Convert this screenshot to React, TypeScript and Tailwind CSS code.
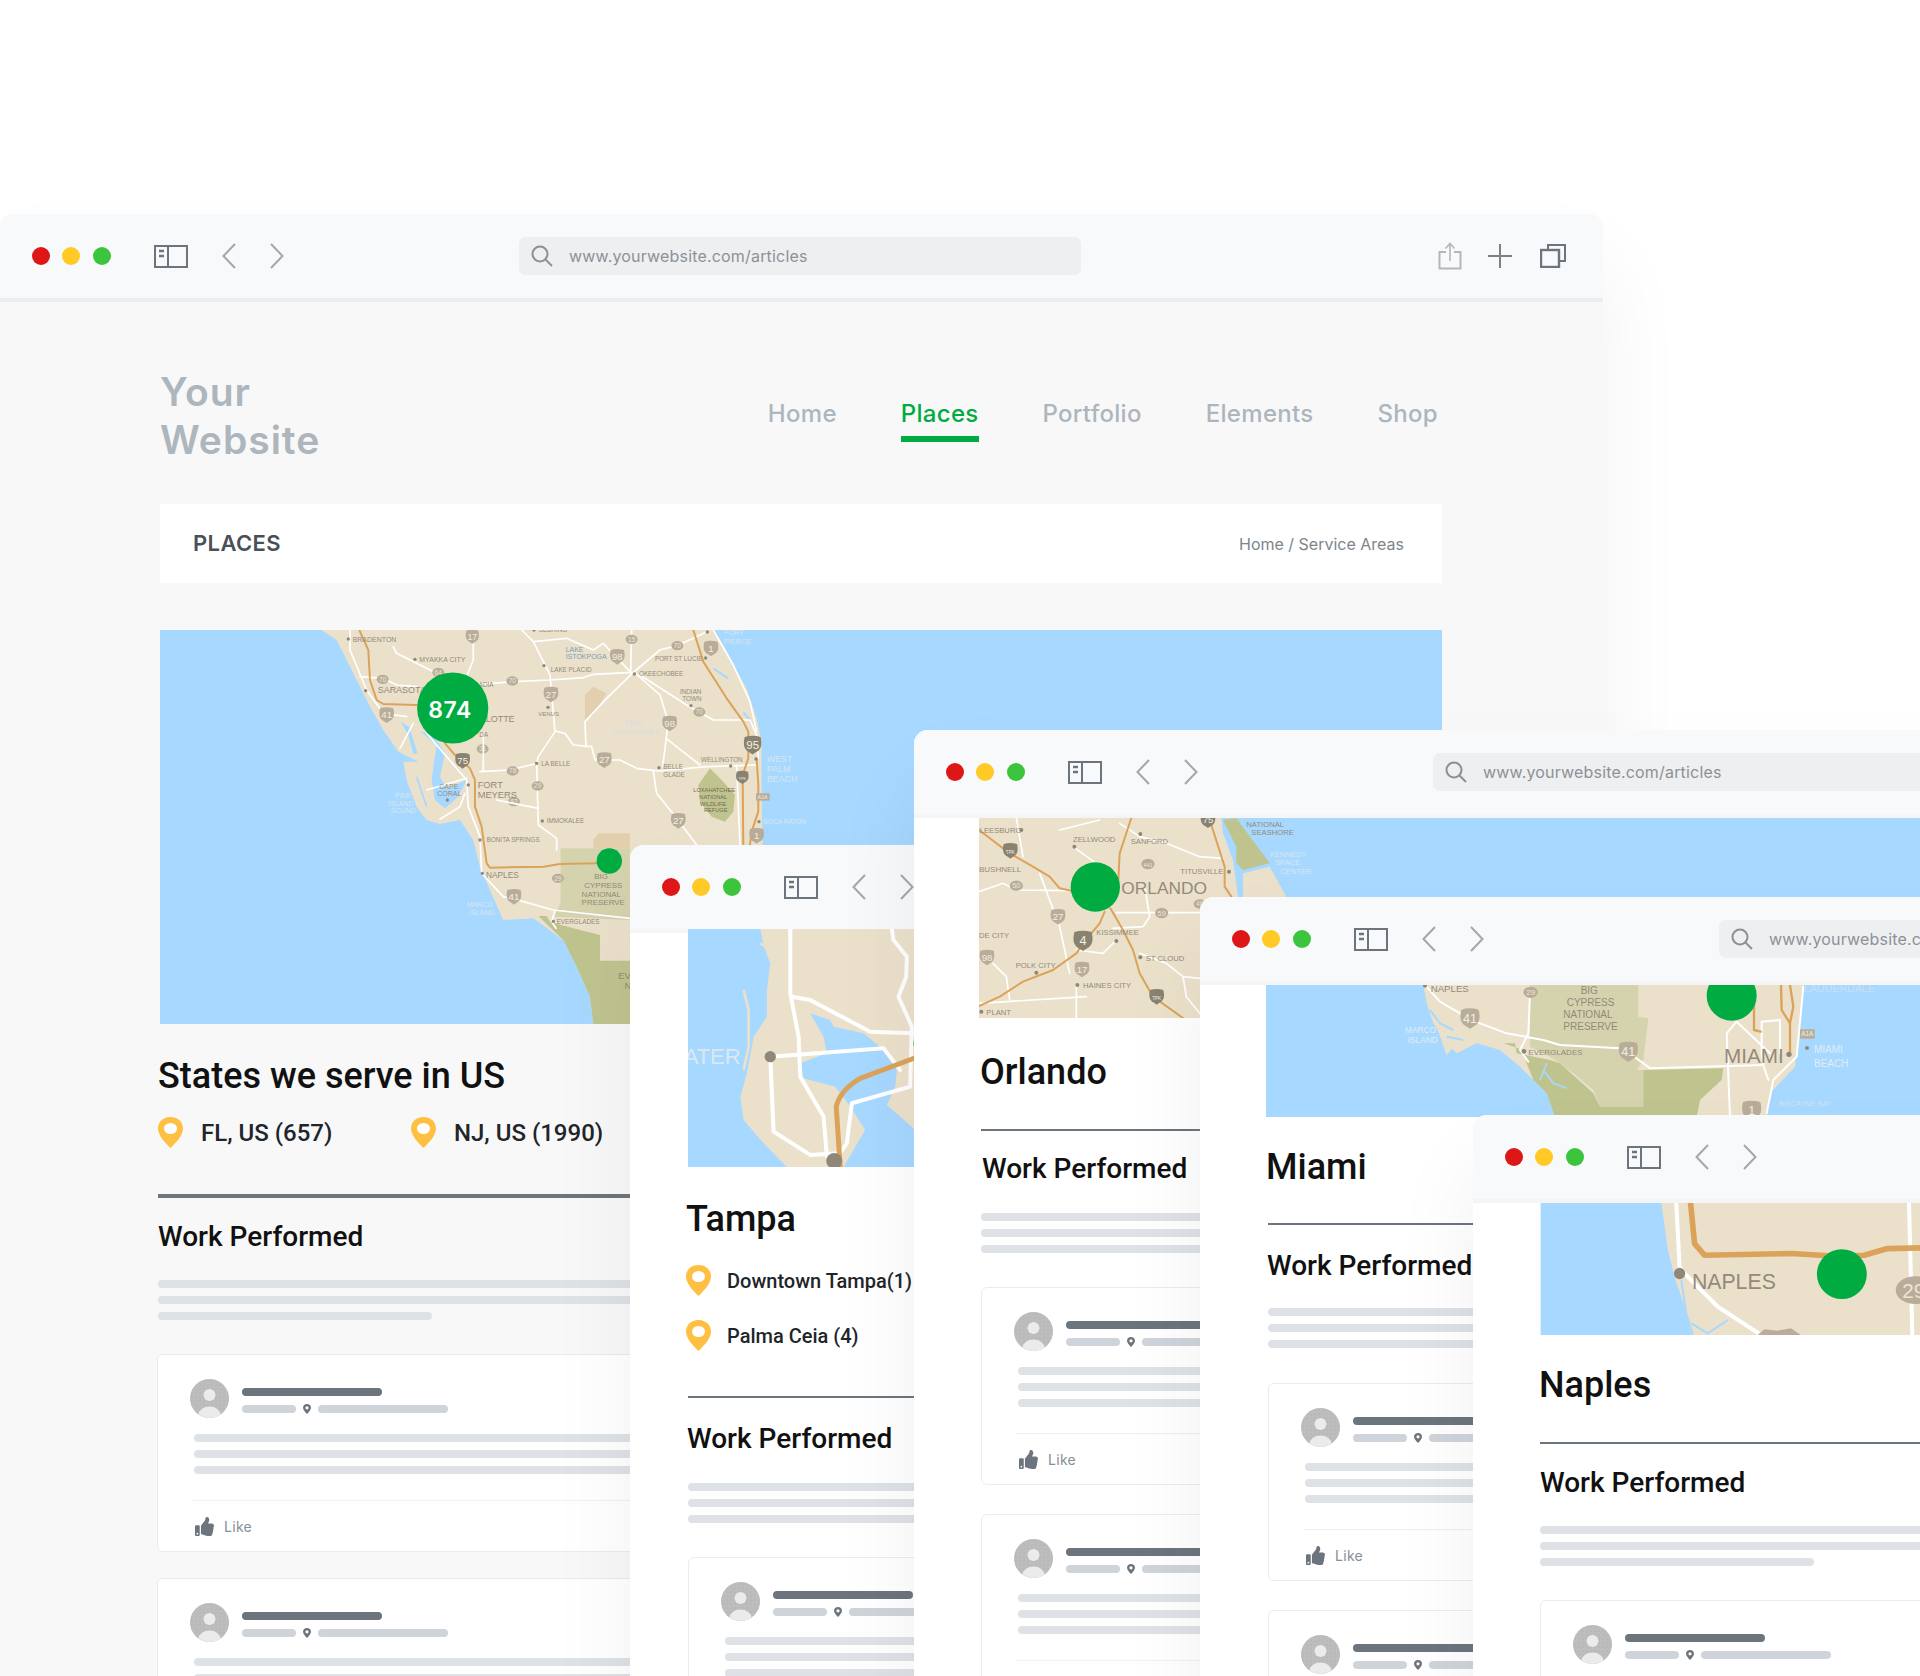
import React from 'react';
import { FaThumbsUp } from 'react-icons/fa';

const INTER = { fontFamily: 'Inter, "Liberation Sans", sans-serif' };
const ROBOTO = { fontFamily: 'Roboto, "Liberation Sans", sans-serif' };
const BLUE = '#a7d8ff';
const LAND = '#ebe1cb';
const ROAD = '#dba35a';
const MAPFONT = 'Liberation Sans, Arial, sans-serif';

type LProps = { x: number; y: number; t: string; s?: number; c?: string };
const L = ({ x, y, t, s = 21, c = '#94897a' }: LProps) => (
  <text x={x} y={y} fontSize={s} fill={c} fontFamily={MAPFONT}>{t}</text>
);
const W = ({ d, w = 5 }: { d: string; w?: number }) => (
  <path d={d} fill="none" stroke="#ffffff" strokeWidth={w} strokeLinejoin="round" strokeLinecap="round" />
);
const H = ({ d, w = 6 }: { d: string; w?: number }) => (
  <path d={d} fill="none" stroke={ROAD} strokeWidth={w} strokeLinejoin="round" strokeLinecap="round" />
);
const Shield = ({ x, y, t, dark, k = 1 }: { x: number; y: number; t: string; dark?: boolean; k?: number }) => (
  <g transform={`translate(${x} ${y}) scale(${k})`}>
    <path d="M-20,-20 Q0,-26 20,-20 Q26,4 15,14 Q6,20 0,24 Q-6,20 -15,14 Q-26,4 -20,-20 Z" fill={dark ? '#8a8270' : '#b9ad99'} />
    <text x="0" y="10" textAnchor="middle" fontSize={t.length > 2 ? 14 : 29} fill="#f3eee2" fontFamily={MAPFONT}>{t}</text>
  </g>
);
const Oval = ({ x, y, t, k = 1 }: { x: number; y: number; t: string; k?: number }) => (
  <g transform={`translate(${x} ${y}) scale(${k})`}>
    <ellipse cx="0" cy="0" rx="18" ry="14" fill="#b9ad99" />
    <text x="0" y="7" textAnchor="middle" fontSize={t.length > 2 ? 15 : 20} fill="#ece5d6" fontFamily={MAPFONT}>{t}</text>
  </g>
);
const Dot = ({ x, y, r = 5 }: { x: number; y: number; r?: number }) => <circle cx={x} cy={y} r={r} fill="#8f8878" />;

/* Overview of south-west Florida (window 1) */
function MapOverview() {
  return (
    <svg viewBox="160 630 1282 394" className="block h-[394px] w-[1282px]">
      <rect x="160" y="630" width="1282" height="394" fill={BLUE} />
      <g transform="translate(150 620) scale(0.3333)">
        <path
          d="M515,30 L560,60 L590,120 L620,180 L660,260 L700,330 L745,395 L805,425 L760,425 L770,480 L800,560 L830,600 L870,612 L930,600 L970,660 L990,740 L1020,810 L1060,900 L1150,895 L1240,960 L1280,1040 L1320,1130 L1330,1212 L1838,1212 L1838,675 L1835,515 L1835,365 L1820,295 L1790,205 L1750,135 L1720,75 L1690,30 Z"
          fill={LAND}
        />
        <path d="M752,305 L778,322 L803,400 L790,402 L775,345 Z" fill={BLUE} />
        <path d="M812,335 L860,375 L850,440 L845,480 L855,540 L885,565 L925,530 L950,480 L890,505 L870,470 L885,400 L850,345 Z" fill={BLUE} />
        <path d="M800,470 L830,560" stroke={BLUE} strokeWidth="5" fill="none" />
        <path d="M1232,685 L1440,685 L1440,900 L1210,890 L1232,850 Z" fill="#d5d3ae" />
        <path d="M1165,888 L1190,888 L1200,905 L1270,925 L1350,945 L1350,1022 L1440,1022 L1440,1212 L1330,1212 L1320,1130 L1280,1040 L1240,960 Z" fill="#bfc48f" />
        <path d="M1330,660 L1345,640 L1440,640 L1440,684 L1330,684 Z" fill="#e3cfae" />
        <path d="M1305,225 L1330,200 L1370,220 L1330,285 L1305,300 Z" fill="#e3cfae" />
        <W d="M600,30 L600,90 L650,210 L700,280 L770,290 M790,310 L750,385 M830,340 L950,480 L955,560 L990,650 L995,760 L1060,830 L1120,845 L1210,870 L1440,895" />
        <W d="M730,80 L740,100 L860,160 M970,30 L970,120 L950,170 M630,170 L700,175 L740,195 L800,200 M1215,875 L1205,905 L1218,925" />
        <W d="M830,510 L950,475 M870,598 L930,560 L945,520" />
        <H d="M628,30 L655,90 L660,180 L680,240 L700,252 L800,255 M885,370 L915,405 L960,445 L975,480 L975,560 L995,620 L1010,730 L1020,743 L1180,740 L1230,732 L1340,730" />
        <Shield x={967} y={50} t="17" k={0.9} />
        <Oval x={698} y={178} t="70" />
        <Shield x={710} y={285} t="41" />
        <Shield x={938} y={422} t="75" dark />
        <Oval x={998} y={387} t="31" />
        <Oval x={1092} y={545} t="82" />
        <Shield x={1092} y={830} t="41" />
        <Oval x={1224} y={775} t="29" />
        <Oval x={865} y={157} t="64" />
        {[[595, 57], [795, 118], [647, 212], [955, 495], [892, 540], [990, 660], [997, 760], [1210, 904], [1158, 431]].map(([x, y]) => (
          <Dot key={`${x}`} x={x} y={y} r={5} />
        ))}
        <L x={608} y={65} t="BRADENTON" />
        <L x={808} y={127} t="MYAKKA CITY" />
        <L x={683} y={220} t="SARASOTA" s={27} />
        <L x={983} y={505} t="FORT" s={28} />
        <L x={983} y={534} t="MEYERS" s={28} />
        <L x={868} y={506} t="CAPE" />
        <L x={862} y={528} t="CORAL" />
        <L x={735} y={535} t="PINE" c="#d9e6ee" />
        <L x={715} y={557} t="ISLAND" c="#d9e6ee" />
        <L x={722} y={578} t="SOUND" c="#d9e6ee" />
        <L x={1008} y={775} t="NAPLES" s={25} />
        <L x={950} y={862} t="MARCO" c="#d9e6ee" />
        <L x={958} y={884} t="ISLAND" c="#d9e6ee" />
        <L x={1333} y={778} t="BIG" s={24} />
        <L x={1303} y={804} t="CYPRESS" s={24} />
        <L x={1295} y={830} t="NATIONAL" s={24} />
        <L x={1295} y={856} t="PRESERVE" s={24} />
        <L x={1220} y={911} t="EVERGLADES" s={19} />
        <L x={1405} y={1076} t="EV" s={28} />
        <L x={1424} y={1106} t="N" s={28} />
      </g>
      <g transform="translate(480 625) scale(0.3333)">
        <path d="M690,430 L730,470 L765,510 L760,560 L735,590 L695,575 L660,530 L655,480 Z" fill="#bfc48f" />
        <path d="M700,130 L745,160 L730,150 M790,262 L810,285" stroke={BLUE} strokeWidth="6" fill="none" />
        <W d="M0,178 L95,170 L210,165 L310,158 L340,148 L460,142 L540,75 L590,62 L640,40 L680,20" />
        <W d="M125,15 L160,50 L210,150 L225,320 L175,395 L170,415 L175,600 L230,640 L230,675 M160,50 L260,40 L340,75 L370,55 L450,140" />
        <W d="M455,15 L452,142 M225,318 L255,325 L280,360 L335,365 L345,405 L420,405 L470,430 L535,438 L680,425 L830,420" />
        <W d="M460,142 L380,220 L315,290 L318,365 M470,148 L540,210 L565,290 L548,425 M480,150 L620,240 L700,285 L810,285 L830,330 L835,400" />
        <W d="M558,340 L660,420 M520,440 L530,505 L590,580 L650,660 M0,440 L90,435 L170,415 M10,330 L10,440 M50,525 L100,535 L175,550 M770,420 L780,660 M700,15 L760,120 L810,230 L830,320" />
        <H d="M640,15 L670,110 L740,220 L790,290 L805,320 L805,400 L788,450 L790,660" />
        <H d="M830,400 L835,480 L835,560 L815,620 L810,660" />
        <Oval x={455} y={43} t="15" />
        <Oval x={592} y={62} t="70" />
        <Shield x={693} y={70} t="1" />
        <Shield x={412} y={95} t="98" />
        <Oval x={97} y={168} t="70" />
        <Shield x={213} y={208} t="27" />
        <Shield x={569} y={295} t="98" />
        <Shield x={373} y={405} t="27" />
        <Shield x={818} y={360} t="95" dark k={1.2} />
        <Oval x={98} y={438} t="78" />
        <Oval x={173} y={483} t="29" />
        <Oval x={658} y={261} t="70" />
        <Shield x={595} y={587} t="27" />
        <Shield x={830} y={632} t="1" />
        <Shield x={787} y={457} t="TPK" dark k={0.85} />
        <rect x="828" y="505" width="41" height="22" fill="#b9ad99" />
        <text x="848" y="522" textAnchor="middle" fontSize="16" fill="#f3eee2" fontFamily={MAPFONT}>A1A</text>
        {[[192, 122], [204, 247], [463, 147], [677, 99], [633, 242], [170, 415], [537, 428], [752, 423], [187, 588], [828, 402], [837, 590], [682, 21], [162, 15]].map(([x, y]) => (
          <Dot key={`${x}-${y}`} x={x} y={y} r={5} />
        ))}
        <L x={212} y={140} t="LAKE PLACID" s={19} />
        <L x={175} y={274} t="VENUS" s={18} />
        <L x={477} y={154} t="OKEECHOBEE" s={19} />
        <L x={525} y={107} t="PORT ST LUCIE" s={19} />
        <L x={600} y={206} t="INDIAN" s={19} />
        <L x={607} y={229} t="TOWN" s={19} />
        <L x={184} y={423} t="LA BELLE" s={19} />
        <L x={550} y={433} t="BELLE" s={19} />
        <L x={550} y={456} t="GLADE" s={19} />
        <L x={663} y={410} t="WELLINGTON" s={19} />
        <L x={200} y={595} t="IMMOKALEE" s={19} />
        <L x={20} y={652} t="BONITA SPRINGS" s={19} />
        <L x={176} y={21} t="SEBRING" s={19} />
        <L x={17} y={290} t="LOTTE" s={27} />
        <L x={-4} y={186} t="ADIA" s={19} />
        <L x={-2} y={337} t="DA" s={19} />
        <L x={850} y={597} t="BOCA RATON" s={20} c="#d9e6ee" />
        <L x={860} y={412} t="WEST" s={27} c="#d9e6ee" />
        <L x={860} y={441} t="PALM" s={27} c="#d9e6ee" />
        <L x={860} y={470} t="BEACH" s={27} c="#d9e6ee" />
        <L x={732} y={30} t="FORT" s={22} c="#d9e6ee" />
        <L x={732} y={56} t="PIERCE" s={22} c="#d9e6ee" />
        <L x={257} y={82} t="LAKE" c="#7a9cb8" />
        <L x={257} y={103} t="ISTOKPOGA" c="#7a9cb8" />
        <L x={435} y={300} t="LAKE" c="#d4dde2" />
        <L x={393} y={326} t="OKEECHOBEE" c="#d4dde2" />
        <L x={640} y={502} t="LOXAHATCHEE" s={17} c="#6f6a50" />
        <L x={658} y={522} t="NATIONAL" s={17} c="#6f6a50" />
        <L x={660} y={542} t="WILDLIFE" s={17} c="#6f6a50" />
        <L x={672} y={562} t="REFUGE" s={17} c="#6f6a50" />
      </g>
      <circle cx="452.7" cy="708" r="35.6" fill="#00ac41" />
      <text x="450" y="718" textAnchor="middle" fontSize="23" fontWeight="600" fill="#ffffff" fontFamily="Inter, sans-serif" letterSpacing="0.5">874</text>
      <circle cx="609.3" cy="861" r="12.7" fill="#00ac41" />
    </svg>
  );
}

function MapTampa() {
  return (
    <svg viewBox="203 297 1282 714" className="block h-[238px] w-[427px]">
      <rect x="203" y="297" width="1282" height="714" fill={BLUE} />
      <path d="M420,297 L430,345 L450,400 L440,480 L440,560 L400,620 L380,730 L360,800 L370,870 L430,940 L500,1011 L900,1011 L900,297 Z" fill={LAND} />
      <path d="M570,550 L630,570 L640,590 L730,610 L790,660 L830,720 L825,770 L800,825 L880,895 L900,1011 L670,1011 L735,900 L690,830 L645,770 L550,745 L540,700 L620,670 L610,620 Z" fill={BLUE} />
      <path d="M370,480 L385,540 L385,650 L370,720 M460,360 L490,355 M420,340 L470,370" stroke={LAND} strokeWidth="8" fill="none" />
      <W w={12} d="M510,297 L510,490 L535,620 L540,740 L610,860 L620,980" />
      <W w={12} d="M515,500 L570,510 L750,605 L880,610" />
      <W w={12} d="M815,297 L820,330 L860,380 L858,440 L835,500 L875,590 L870,770 L695,820 L680,940 L660,970 L570,975 L460,905 L450,680 L790,655 L840,720" />
      <H w={15} d="M900,678 L720,745 Q660,780 648,830 L660,1011" />
      <Dot x={450} y={680} r={17} />
      <Dot x={642} y={993} r={24} />
      <L x={190} y={702} t="ATER" s={66} c="#dde8ee" />
      <circle cx="925" cy="640" r="45" fill="#00ac41" />
    </svg>
  );
}

function MapOrlando() {
  return (
    <svg viewBox="238 294 3846 600" className="block h-[200px] w-[1282px]">
      <rect x="238" y="294" width="3846" height="600" fill={BLUE} />
      <path d="M238,294 L965,294 L970,340 L1000,420 L1015,530 L1000,894 L238,894 Z" fill={LAND} />
      <path d="M1030,460 L1110,440 L1160,530 L1030,535 Z" fill={LAND} />
      <path d="M970,300 L1010,380 L1010,430 L1030,450 L1110,430 L1010,295 Z" fill="#bfc48f" />
      <W d="M238,515 L310,490 L350,510 L510,512 M650,578 L900,578 M420,460 L480,620 L510,760 M530,690 L610,700 L650,660 M530,794 L530,894 M560,830 L238,850 M660,310 L720,350 L800,370 L900,410 L970,415 M480,330 L600,300 M520,380 L590,430 M280,730 L320,770 L330,840 M735,500 L750,590 L730,620 L640,625 M720,700 L800,730 L850,770 L900,775 M850,770 L860,830 L900,880 M350,294 L370,410" />
      <H d="M238,330 L330,400 L400,440 L450,470 L480,505 L515,512 M615,575 L600,610 L550,670 L530,700 L460,750 L370,785 L300,830 L238,858 M632,565 L670,630 L700,690 L720,760 L760,830 L850,894 M695,294 L660,400 L655,500 M935,315 L975,440 L975,500 L995,530" />
      <Shield x={332} y={392} t="TPK" dark />
      <Oval x={350} y={497} t="50" k={1.1} />
      <Shield x={475} y={590} t="27" />
      <Shield x={550} y={662} t="4" dark k={1.3} />
      <Shield x={547} y={748} t="17" />
      <Shield x={262} y={712} t="98" />
      <Oval x={745} y={432} t="441" k={1.1} />
      <Oval x={786} y={579} t="59" k={1.1} />
      <Shield x={925} y={300} t="75" dark />
      <Shield x={771} y={830} t="TPK" dark />
      <Oval x={900} y={552} t="46" />
      {[[365, 330], [524, 380], [722, 342], [988, 455], [650, 663], [722, 712], [410, 758], [533, 795], [245, 875]].map(([x, y]) => (
        <Dot key={`${x}`} x={x} y={y} r={6} />
      ))}
      <L x={240} y={338} t="LEESBURG" s={23} />
      <L x={238} y={455} t="BUSHNELL" s={24} />
      <L x={520} y={367} t="ZELLWOOD" s={23} />
      <L x={693} y={373} t="SANFORD" s={23} />
      <L x={842} y={463} t="TITUSVILLE" s={23} />
      <L x={665} y={522} t="ORLANDO" s={52} />
      <L x={590} y={646} t="KISSIMMEE" s={23} />
      <L x={738} y={722} t="ST CLOUD" s={23} />
      <L x={550} y={805} t="HAINES CITY" s={23} />
      <L x={348} y={743} t="POLK CITY" s={23} />
      <L x={238} y={653} t="DE CITY" s={23} />
      <L x={260} y={884} t="PLANT" s={23} />
      <L x={1040} y={320} t="NATIONAL" s={23} />
      <L x={1055} y={346} t="SEASHORE" s={23} />
      <L x={1110} y={410} t="KENNEDY" s={23} c="#d9e6ee" />
      <L x={1126} y={436} t="SPACE" s={23} c="#d9e6ee" />
      <L x={1142} y={463} t="CENTER" s={23} c="#d9e6ee" />
      <circle cx="587" cy="501" r="74" fill="#00ac41" />
    </svg>
  );
}

function MapMiami() {
  return (
    <svg viewBox="18 15 3846 396" className="block h-[132px] w-[1282px]">
      <rect x="18" y="15" width="3846" height="396" fill={BLUE} />
      <path d="M490,15 L500,70 L520,130 L560,190 L590,220 L650,190 L720,210 L780,260 L820,300 L860,340 L885,411 L1520,411 L1530,340 L1605,260 L1632,15 Z" fill={LAND} />
      <path d="M530,140 L560,225 L590,190 Z" fill={LAND} />
      <path d="M510,90 L540,130 L580,150 M560,170 L610,180" stroke={BLUE} strokeWidth="6" fill="none" />
      <path d="M810,15 L1135,15 L1135,110 L1165,115 L1150,240 L1130,270 L1150,270 L1150,380 L1020,380 L1000,330 L940,280 L900,250 L870,230 L810,200 Z" fill="#d5d3ae" />
      <path d="M1150,270 L1390,265 L1385,300 L1320,360 L1310,411 L885,411 L860,340 L820,300 L800,250 L790,210 L730,190 L765,190 L770,220 L870,240 L900,250 L1000,340 L1020,380 L1150,380 Z" fill="#bfc48f" />
      <path d="M850,270 L880,310 L920,325 M860,250 L840,300" stroke={BLUE} strokeWidth="5" fill="none" />
      <W w={6} d="M495,15 L540,65 L600,100 L660,130 L740,160 L850,180 L900,195 L1080,205 L1130,235 L1170,265 L1510,255" />
      <W w={6} d="M810,40 L805,160 L780,210 L805,245" />
      <W w={6} d="M1430,125 L1400,160 L1410,411 M1430,125 L1530,220 M1505,125 L1505,220 M1505,125 L1560,120 L1560,220 M1525,300 L1510,255 L1505,220 M1630,20 L1610,230 L1540,300 L1520,400" />
      <H w={7} d="M1482,70 L1482,150 L1502,155" />
      <H w={7} d="M1563,15 L1565,90 L1590,130 L1590,215 M1590,15 L1600,80 L1590,130" />
      <Oval x={812} y={37} t="29" k={1.2} />
      <Shield x={630} y={115} t="41" k={1.3} />
      <Shield x={1105} y={215} t="41" k={1.3} />
      <Shield x={1475} y={392} t="1" k={1.3} />
      <rect x="1620" y="148" width="44" height="28" fill="#b9ad99" />
      <text x="1642" y="169" textAnchor="middle" fontSize="19" fill="#f3eee2" fontFamily={MAPFONT}>A1A</text>
      <Dot x={495} y={17} r={6} />
      <Dot x={792} y={214} r={7} />
      <Dot x={1587} y={223} r={8} />
      <Dot x={1641} y={204} r={6} />
      <L x={512} y={36} t="NAPLES" s={29} />
      <L x={435} y={158} t="MARCO" s={25} c="#e0ecf4" />
      <L x={443} y={188} t="ISLAND" s={25} c="#e0ecf4" />
      <L x={805} y={225} t="EVERGLADES" s={24} />
      <L x={962} y={42} t="BIG" s={30} />
      <L x={920} y={77} t="CYPRESS" s={30} />
      <L x={910} y={113} t="NATIONAL" s={30} />
      <L x={910} y={149} t="PRESERVE" s={30} />
      <L x={1392} y={250} t="MIAMI" s={62} />
      <L x={1662} y={220} t="MIAMI" s={30} c="#e0ecf4" />
      <L x={1662} y={262} t="BEACH" s={30} c="#e0ecf4" />
      <L x={1557} y={377} t="BISCAYNE BAY" s={22} c="#d0e4f2" />
      <L x={1632} y={36} t="LAUDERDALE" s={32} c="#c9e0f2" />
      <circle cx="1415" cy="47" r="75" fill="#00ac41" />
    </svg>
  );
}

function MapNaples() {
  return (
    <svg viewBox="207 308 3846 397" className="block h-[132px] w-[1282px]">
      <rect x="207" y="308" width="3846" height="397" fill={BLUE} />
      <path d="M570,308 L590,450 L610,530 L640,620 L660,705 L1700,705 L1700,308 Z" fill={LAND} />
      <path d="M630,540 L645,640 L665,705 M660,670 L710,700 L770,660" stroke={BLUE} strokeWidth="6" fill="none" />
      <W w={12} d="M615,308 L625,500 L640,520 L740,620 L870,705 M1315,308 L1325,705" />
      <H w={17} d="M658,308 L670,430 L700,465 L960,460 L1100,468 L1180,465 L1250,445 L1500,440" />
      <path d="M860,705 L880,688 L920,692 L960,685 L990,705 Z" fill="#b9ad99" />
      <Dot x={625} y={520} r={17} />
      <L x={662} y={568} t="NAPLES" s={64} />
      <ellipse cx="1335" cy="570" rx="60" ry="42" fill="#b9ad99" />
      <text x="1295" y="593" fontSize="62" fill="#ece5d6" fontFamily={MAPFONT}>29</text>
      <circle cx="1113" cy="522" r="75" fill="#00ac41" />
    </svg>
  );
}

function Chevron({ flip }: { flip?: boolean }) {
  return (
    <svg width="14" height="26" viewBox="0 0 14 26" className="block shrink-0" style={flip ? { transform: 'scaleX(-1)' } : undefined}>
      <path d="M13,1 L1.5,13 L13,25" fill="none" stroke="#a3a7aa" strokeWidth="2" />
    </svg>
  );
}

function Toolbar({ line }: { line: string }) {
  return (
    <div className={`flex h-[88px] shrink-0 items-center rounded-t-[14px] bg-[#f8f9fa] pl-[32px] pr-[37px] border-b-4 ${line}`}>
      <span className="h-[18px] w-[18px] shrink-0 rounded-full bg-[#dd1717]" />
      <span className="ml-[12px] h-[18px] w-[18px] shrink-0 rounded-full bg-[#ffc926]" />
      <span className="ml-[13px] h-[18px] w-[18px] shrink-0 rounded-full bg-[#3cc43c]" />
      <svg width="34" height="23" viewBox="0 0 34 23" className="ml-[43px] block shrink-0">
        <rect x="1" y="1" width="32" height="21" fill="none" stroke="#6c757d" strokeWidth="2" />
        <path d="M14,1 V22" stroke="#6c757d" strokeWidth="2" />
        <path d="M5,6 H10 M5,11 H10" stroke="#6c757d" strokeWidth="2.4" />
      </svg>
      <div className="ml-[34px]"><Chevron /></div>
      <div className="ml-[34px]"><Chevron flip /></div>
      <div className="ml-[235px] flex h-[38px] w-[562px] shrink-0 items-center rounded-[7px] bg-[#eeeff1] pl-[12px]" style={INTER}>
        <svg width="22" height="22" viewBox="0 0 22 22" className="block shrink-0">
          <circle cx="9" cy="9" r="7.5" fill="none" stroke="#8b9095" strokeWidth="2" />
          <path d="M14.5,14.5 L21,21" stroke="#8b9095" strokeWidth="2" />
        </svg>
        <span className="ml-[16px] text-[16px] tracking-[0.18px] text-[#8d9196]">www.yourwebsite.com/articles</span>
      </div>
      <svg width="24" height="28" viewBox="0 0 24 28" className="ml-auto block shrink-0">
        <path d="M8,10 H1.5 V26.5 H22.5 V10 H16" fill="none" stroke="#b4b7ba" strokeWidth="2" />
        <path d="M12,19 V2 M7.5,6.5 L12,1.5 L16.5,6.5" fill="none" stroke="#b4b7ba" strokeWidth="1.6" />
      </svg>
      <svg width="24" height="24" viewBox="0 0 24 24" className="ml-[26px] block shrink-0">
        <path d="M12,0 V24 M0,12 H24" stroke="#7c8186" strokeWidth="2" />
      </svg>
      <svg width="26" height="24" viewBox="0 0 26 24" className="ml-[28px] block shrink-0">
        <path d="M8,5 V1 H25 V17 H20" fill="none" stroke="#6c757d" strokeWidth="2" />
        <rect x="1" y="6" width="18" height="17" fill="none" stroke="#6c757d" strokeWidth="2.4" />
      </svg>
    </div>
  );
}

function Bar({ cls }: { cls: string }) {
  return <div className={`h-[8px] rounded-full ${cls}`} />;
}

function TextLines({ last }: { last: string }) {
  return (
    <div className="flex flex-col gap-[8px]">
      <Bar cls="w-full bg-[#dee2e6]" />
      <Bar cls="w-full bg-[#dee2e6]" />
      <Bar cls={`${last} bg-[#dee2e6]`} />
    </div>
  );
}

function Avatar() {
  return (
    <svg width="39" height="39" viewBox="0 0 39 39" className="block shrink-0">
      <defs>
        <clipPath id="av"><circle cx="19.5" cy="19.5" r="19.5" /></clipPath>
        <pattern id="avd" width="4" height="4" patternUnits="userSpaceOnUse">
          <circle cx="2" cy="2" r="0.6" fill="#a6a6a6" />
        </pattern>
      </defs>
      <g clipPath="url(#av)">
        <rect width="39" height="39" fill="#bdbdbd" />
        <rect width="39" height="39" fill="url(#avd)" />
        <circle cx="19.5" cy="16" r="6" fill="#ebebeb" />
        <ellipse cx="19.5" cy="36" rx="11" ry="8.5" fill="#ebebeb" />
      </g>
    </svg>
  );
}

function TinyPin() {
  return (
    <svg width="8" height="10" viewBox="0 0 8 10" className="block shrink-0">
      <path d="M4,0 C6.4,0 8,1.7 8,3.8 C8,6 5.5,8.5 4,10 C2.5,8.5 0,6 0,3.8 C0,1.7 1.6,0 4,0 Z" fill="#6c757d" />
      <circle cx="4" cy="3.8" r="1.6" fill="#ffffff" />
    </svg>
  );
}

function Card() {
  return (
    <div className="h-[198px] rounded-[6px] border border-[#e9ecef] bg-white pl-[32px] pt-[24px]">
      <div className="flex items-start">
        <Avatar />
        <div className="ml-[13px] pt-[9px]">
          <div className="h-[8px] w-[140px] rounded-full bg-[#6c757d]" />
          <div className="mt-[8px] flex items-center">
            <div className="h-[8px] w-[54px] rounded-full bg-[#ced4da]" />
            <div className="ml-[7px]"><TinyPin /></div>
            <div className="ml-[7px] h-[8px] w-[130px] rounded-full bg-[#ced4da]" />
          </div>
        </div>
      </div>
      <div className="ml-[4px] mt-[16px]">
        <TextLines last="w-full" />
      </div>
      <div className="ml-[2px] mt-[26px] border-t border-[#eef0f2] pl-[2px] pt-[15px]">
        <div className="flex items-center" style={INTER}>
          <FaThumbsUp className="h-[19px] w-[21px] text-[#6c757d]" />
          <span className="ml-[9px] text-[14px] tracking-[0.3px] text-[#868e96]">Like</span>
        </div>
      </div>
    </div>
  );
}

function YellowPin() {
  return (
    <svg width="25" height="31" viewBox="0 0 25 31" className="block shrink-0">
      <path d="M12.5,0 C20,0 25,5 25,11.5 C25,19 17,26.5 12.5,31 C8,26.5 0,19 0,11.5 C0,5 5,0 12.5,0 Z" fill="#ffbf42" />
      <ellipse cx="12.5" cy="11.5" rx="6.5" ry="5.5" fill="#ffffff" />
    </svg>
  );
}

function Page({ children }: { children: React.ReactNode }) {
  return <div className="w-[1285px]" style={ROBOTO}>{children}</div>;
}

function App() {
  return (
    <div className="relative h-[1676px] w-[1920px] overflow-hidden bg-white">
      {/* Window 1 */}
      <section className="absolute left-0 top-[214px] h-[1600px] w-[1603px] rounded-t-[14px] bg-[#f8f8f9] shadow-[0_50px_90px_rgba(0,0,0,0.06)]">
        <Toolbar line="border-[#ededee]" />
        <div className="pl-[158px]">
          <Page>
            <header className="ml-[3px] mt-[66px] flex h-[94px] w-[1277px] items-start justify-between" style={INTER}>
              <div className="-ml-[1px] text-[39px] font-semibold leading-[48px] tracking-[1px] text-[#adb5bd]">Your<br />Website</div>
              <nav className="mt-[29px] flex gap-[64px] text-[24px] font-medium leading-[34px] tracking-[0.3px] text-[#adb5bd]">
                <span>Home</span>
                <span className="relative text-[#00ac41]">
                  Places
                  <span className="absolute -bottom-[11px] left-0 right-0 h-[6px] bg-[#00ac41]" />
                </span>
                <span>Portfolio</span>
                <span>Elements</span>
                <span>Shop</span>
              </nav>
            </header>
            <div className="ml-[2px] mt-[42px] flex h-[79px] w-[1282px] items-center justify-between bg-white pl-[33px] pr-[38px]" style={INTER}>
              <span className="-mt-[1px] text-[22px] font-semibold tracking-[0.4px] text-[#495057]">PLACES</span>
              <span className="mt-[1px] text-[16px] text-[#7d858c]">Home / Service Areas</span>
            </div>
            <div className="ml-[2px] mt-[47px]"><MapOverview /></div>
            <h1 className="mt-[29px] text-[36px] font-medium leading-[46px] text-[#111]">States we serve in US</h1>
            <div className="mt-[18px] flex items-start">
              <YellowPin />
              <span className="ml-[18px] mt-[1px] w-[210px] text-[24px] font-medium leading-[31px] text-[#212529]">FL, US (657)</span>
              <YellowPin />
              <span className="ml-[18px] mt-[1px] text-[24px] font-medium leading-[31px] text-[#212529]">NJ, US (1990)</span>
            </div>
            <div className="mt-[45px] h-[4px] bg-[#6c757d]" />
            <h2 className="mt-[21px] text-[28px] font-medium leading-[36px] text-[#111]">Work Performed</h2>
            <div className="mt-[25px]"><TextLines last="w-[274px]" /></div>
            <div className="-ml-[1px] mt-[34px] flex flex-col gap-[26px]">
              <Card />
              <Card />
            </div>
          </Page>
        </div>
      </section>

      {/* Window 2: Tampa */}
      <section className="absolute left-[630px] top-[845px] h-[1600px] w-[1603px] rounded-t-[14px] bg-white shadow-[0_50px_90px_rgba(0,0,0,0.06)]">
        <Toolbar line="border-[#f5f5f6]" />
        <div className="pl-[58px]">
          <Page>
            <div className="-mt-[4px]"><MapTampa /></div>
            <h1 className="-ml-[2px] mt-[29px] text-[36px] font-medium leading-[46px] text-[#111]">Tampa</h1>
            <div className="-ml-[2px] mt-[23px] flex items-start">
              <YellowPin />
              <span className="ml-[16px] mt-[1px] text-[20px] font-medium leading-[31px] text-[#212529]">Downtown Tampa(1)</span>
            </div>
            <div className="-ml-[2px] mt-[23px] flex items-start">
              <YellowPin />
              <span className="ml-[16px] mt-[1px] text-[20px] font-medium leading-[31px] text-[#212529]">Palma Ceia (4)</span>
            </div>
            <div className="mt-[44px] h-[2px] bg-[#6c757d]" />
            <h2 className="-ml-[1px] mt-[23px] text-[28px] font-medium leading-[36px] text-[#111]">Work Performed</h2>
            <div className="mt-[26px]"><TextLines last="w-[274px]" /></div>
            <div className="mt-[34px] flex flex-col gap-[26px]">
              <Card />
            </div>
          </Page>
        </div>
      </section>

      {/* Window 3: Orlando */}
      <section className="absolute left-[914px] top-[730px] h-[1600px] w-[1603px] rounded-t-[14px] bg-white shadow-[0_50px_90px_rgba(0,0,0,0.06)]">
        <Toolbar line="border-[#f5f5f6]" />
        <div className="pl-[67px]">
          <Page>
            <div className="-ml-[2px]"><MapOrlando /></div>
            <h1 className="-ml-[1px] mt-[31px] text-[36px] font-medium leading-[46px] text-[#111]">Orlando</h1>
            <div className="mt-[34px] h-[2px] bg-[#6c757d]" />
            <h2 className="ml-[1px] mt-[20px] text-[28px] font-medium leading-[36px] text-[#111]">Work Performed</h2>
            <div className="mt-[26px]"><TextLines last="w-[274px]" /></div>
            <div className="mt-[34px] flex flex-col gap-[29px]">
              <Card />
              <Card />
            </div>
          </Page>
        </div>
      </section>

      {/* Window 4: Miami */}
      <section className="absolute left-[1200px] top-[897px] h-[1600px] w-[1603px] rounded-t-[14px] bg-white shadow-[0_50px_90px_rgba(0,0,0,0.06)]">
        <Toolbar line="border-[#f5f5f6]" />
        <div className="pl-[68px]">
          <Page>
            <div className="-ml-[2px]"><MapMiami /></div>
            <h1 className="-ml-[2px] mt-[28px] text-[36px] font-medium leading-[44px] text-[#111]">Miami</h1>
            <div className="mt-[34px] h-[2px] bg-[#6c757d]" />
            <h2 className="-ml-[1px] mt-[23px] text-[28px] font-medium leading-[36px] text-[#111]">Work Performed</h2>
            <div className="mt-[24px]"><TextLines last="w-[274px]" /></div>
            <div className="mt-[35px] flex flex-col gap-[29px]">
              <Card />
              <Card />
            </div>
          </Page>
        </div>
      </section>

      {/* Window 5: Naples */}
      <section className="absolute left-[1473px] top-[1115px] h-[1600px] w-[1603px] rounded-t-[14px] bg-white shadow-[0_50px_90px_rgba(0,0,0,0.06)]">
        <Toolbar line="border-[#f5f5f6]" />
        <div className="pl-[67px]">
          <Page>
            <div className="-ml-[1px]"><MapNaples /></div>
            <h1 className="-ml-[1px] mt-[28px] text-[36px] font-medium leading-[44px] text-[#111]">Naples</h1>
            <div className="mt-[35px] h-[2px] bg-[#6c757d]" />
            <h2 className="mt-[21px] text-[28px] font-medium leading-[36px] text-[#111]">Work Performed</h2>
            <div className="mt-[25px]"><TextLines last="w-[274px]" /></div>
            <div className="mt-[34px] flex flex-col gap-[26px]">
              <Card />
            </div>
          </Page>
        </div>
      </section>
    </div>
  );
}

export default App;
